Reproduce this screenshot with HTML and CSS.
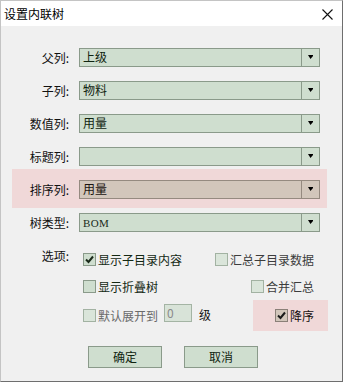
FILE: index.html
```html
<!DOCTYPE html>
<html lang="zh">
<head>
<meta charset="utf-8">
<title>设置内联树</title>
<link rel="stylesheet" href="styles.css">
</head>
<body>
<div class="window">
  <div class="titlebar">
    <span class="title">设置内联树</span>
    <svg class="close" width="11" height="11" viewBox="0 0 11 11"><path d="M0.5 0.5 L10.5 10.5 M10.5 0.5 L0.5 10.5" stroke="#111" stroke-width="1.1" fill="none"/></svg>
  </div>
  <div class="content">
    <div class="row">
      <span class="label">父列:</span>
      <div class="combo"><span class="value">上级</span><span class="btn"><svg width="5" height="4" viewBox="0 0 5 4"><path d="M0 0H5V1L2.5 4Z" fill="#000"/></svg></span></div>
    </div>
    <div class="row">
      <span class="label">子列:</span>
      <div class="combo"><span class="value">物料</span><span class="btn"><svg width="5" height="4" viewBox="0 0 5 4"><path d="M0 0H5V1L2.5 4Z" fill="#000"/></svg></span></div>
    </div>
    <div class="row">
      <span class="label">数值列:</span>
      <div class="combo"><span class="value">用量</span><span class="btn"><svg width="5" height="4" viewBox="0 0 5 4"><path d="M0 0H5V1L2.5 4Z" fill="#000"/></svg></span></div>
    </div>
    <div class="row">
      <span class="label">标题列:</span>
      <div class="combo"><span class="value"></span><span class="btn"><svg width="5" height="4" viewBox="0 0 5 4"><path d="M0 0H5V1L2.5 4Z" fill="#000"/></svg></span></div>
    </div>
    <div class="row row-hl">
      <span class="label">排序列:</span>
      <div class="combo combo-hl"><span class="value">用量</span><span class="btn"><svg width="5" height="4" viewBox="0 0 5 4"><path d="M0 0H5V1L2.5 4Z" fill="#000"/></svg></span></div>
    </div>
    <div class="row row-after">
      <span class="label">树类型:</span>
      <div class="combo"><span class="value latin">BOM</span><span class="btn"><svg width="5" height="4" viewBox="0 0 5 4"><path d="M0 0H5V1L2.5 4Z" fill="#000"/></svg></span></div>
    </div>

    <div class="options">
      <span class="label opt-label">选项:</span>
      <div class="opt-area">
        <div class="opt-row">
          <label class="check"><span class="box"><svg width="11" height="11" viewBox="0 0 11 11"><path d="M2 5.5 L4.5 8 L9 2.5" stroke="#1a2a1a" stroke-width="2" fill="none"/></svg></span><span>显示子目录内容</span></label>
          <label class="check muted"><span class="box light"></span><span>汇总子目录数据</span></label>
        </div>
        <div class="opt-row">
          <label class="check"><span class="box"></span><span>显示折叠树</span></label>
          <label class="check muted"><span class="box light"></span><span>合并汇总</span></label>
        </div>
        <div class="opt-row opt-last">
          <div class="expand">
            <label class="check disabled"><span class="box light"></span><span>默认展开到</span></label>
            <span class="spin">0</span>
            <span class="unit">级</span>
          </div>
          <div class="hl-box">
            <label class="check"><span class="box box-hl"><svg width="11" height="11" viewBox="0 0 11 11"><path d="M2 5.5 L4.5 8 L9 2.5" stroke="#1a1a1a" stroke-width="2" fill="none"/></svg></span><span>降序</span></label>
          </div>
        </div>
      </div>
    </div>

    <div class="buttons">
      <button class="button">确定</button>
      <button class="button">取消</button>
    </div>
  </div>
</div>
</body>
</html>
```

FILE: styles.css
```css
* { box-sizing: border-box; }
html, body {
  margin: 0;
  padding: 0;
  background: #ffffff;
}
body {
  font-family: "Noto Sans CJK SC", "Noto Sans", sans-serif;
  font-size: 12px;
  color: #000;
}
.window {
  width: 343px;
  height: 382px;
  border-top: 1px solid #c4c4c4;
  border-left: 1px solid #c4c4c4;
  border-right: 1px solid #6e6e6e;
  border-bottom: 1px solid #6e6e6e;
  display: flex;
  flex-direction: column;
  background: #f0f0f0;
}
.titlebar {
  height: 25px;
  background: #ffffff;
  display: flex;
  align-items: center;
  justify-content: space-between;
  padding: 0 9px 0 3px;
}
.title {
  font-size: 12px;
  line-height: 14px;
  color: #000;
}
.close { display: block; margin-top: 1px; }
.content {
  flex: 1;
  display: flex;
  flex-direction: column;
  padding-top: 22px;
}
.row {
  display: grid;
  grid-template-columns: 57px 241px;
  column-gap: 10px;
  align-items: center;
  margin-left: 11px;
  width: 315px;
  padding-right: 7px;
}
.row + .row { margin-top: 14px; }
.row.row-hl {
  margin-top: 3px;
  padding-top: 11px;
  padding-bottom: 9px;
  background: #f0d8d8;
}
.row.row-after { margin-top: 5px; }
.label {
  text-align: right;
  line-height: 14px;
  color: #111;
  white-space: nowrap;
}
.combo {
  height: 19px;
  display: flex;
  background: #cfdecf;
  border: 1px solid #8a9a8a;
}
.combo .value {
  flex: 1;
  padding-left: 3px;
  line-height: 16px;
  color: #102410;
}
.combo .value.latin {
  font-family: "Liberation Serif", serif;
  font-size: 11px;
  font-weight: normal;
  line-height: 18px;
  color: #1a2c1a;
  letter-spacing: 0.3px;
}
.combo .btn {
  width: 18px;
  border-left: 1px solid #8a9a8a;
  display: flex;
  align-items: center;
  justify-content: center;
}
.combo .btn svg { display: block; margin-top: -1px; }
.combo-hl {
  background: #d2c6bb;
  border-color: #958a80;
}
.combo-hl .btn { border-left-color: #958a80; }
.combo-hl .value { color: #1a1410; }

.options {
  display: grid;
  grid-template-columns: 57px 245px;
  column-gap: 14px;
  margin-left: 11px;
  margin-top: 18px;
}
.opt-label {
  line-height: 12px;
}
.opt-area {
  display: flex;
  flex-direction: column;
  padding-top: 3px;
}
.opt-row {
  display: flex;
  justify-content: space-between;
  align-items: center;
  height: 13px;
  padding-right: 14px;
}
.opt-row + .opt-row { margin-top: 14px; }
.opt-row.opt-last {
  height: 31px;
  margin-top: 7px;
  padding-right: 0;
}
.check {
  display: flex;
  align-items: center;
  gap: 2px;
  line-height: 13px;
  color: #132813;
  white-space: nowrap;
}
.check.muted { color: #3c3c3c; }
.check.disabled { color: #6a6a6a; }
.box {
  width: 13px;
  height: 13px;
  background: #cfdecf;
  border: 1px solid #8a9a8a;
  display: flex;
  align-items: center;
  justify-content: center;
}
.box svg { display: block; }
.box.light {
  background: #dae5da;
  border-color: #a2b2a2;
}
.box.box-hl {
  background: #d2c6bb;
  border-color: #8a8078;
}
.expand {
  display: flex;
  align-items: center;
}
.spin {
  width: 28px;
  height: 18px;
  margin-left: 6px;
  margin-top: -5px;
  background: #d8e3d8;
  border: 1px solid #a4b4a4;
  color: #8a8a8a;
  line-height: 16px;
  padding-left: 2px;
}
.unit {
  margin-left: 7px;
  margin-top: -3px;
  color: #111;
}
.hl-box {
  background: #f0d8d8;
  height: 31px;
  width: 75px;
  display: flex;
  align-items: center;
  justify-content: flex-end;
  padding-right: 14px;
}
.hl-box .check { color: #161010; }
.buttons {
  display: flex;
  justify-content: center;
  gap: 22px;
  margin-top: 15px;
  padding-left: 3px;
}
.button {
  width: 74px;
  height: 22px;
  background: #cfdecf;
  border: 1px solid #8a9a8a;
  font-family: "Noto Sans CJK SC", "Noto Sans", sans-serif;
  font-size: 12px;
  color: #102410;
  padding: 0;
  line-height: 18px;
}
```
